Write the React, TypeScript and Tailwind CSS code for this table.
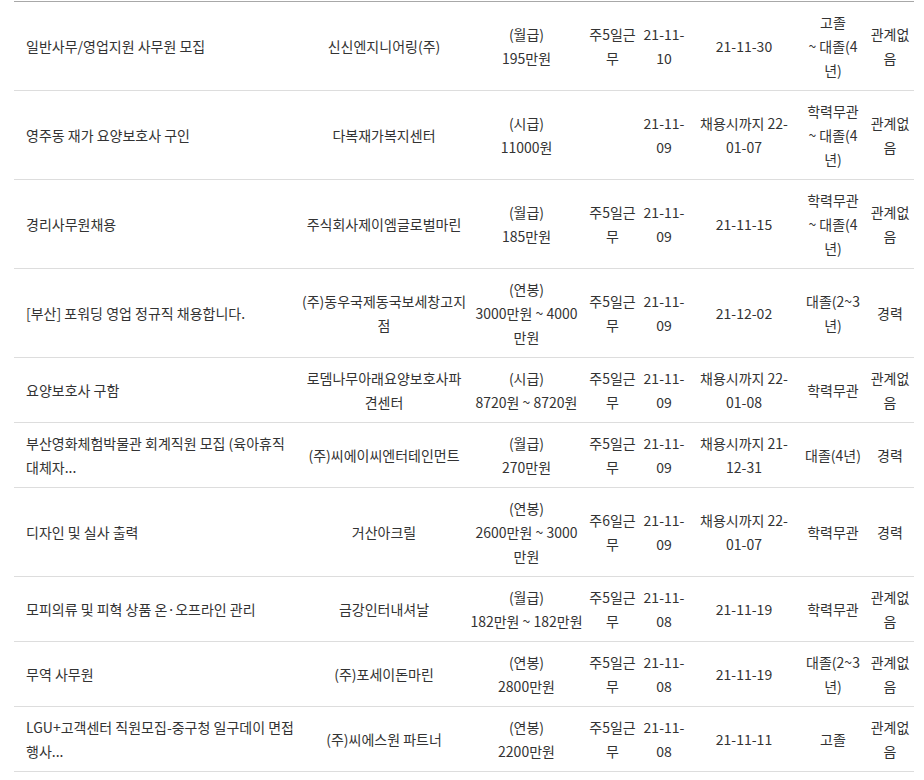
import React from 'react';

type Job = {
  title: string;
  company: string;
  payType: string;
  pay: string;
  work: string;
  date: string;
  deadline: string;
  edu: React.ReactNode;
  exp: string;
};

const jobs: Job[] = [
  { title: '일반사무/영업지원 사무원 모집', company: '신신엔지니어링(주)', payType: '(월급)', pay: '195만원', work: '주5일근무', date: '21-11-10', deadline: '21-11-30', edu: <>고졸<br />~ 대졸(4년)</>, exp: '관계없음' },
  { title: '영주동 재가 요양보호사 구인', company: '다복재가복지센터', payType: '(시급)', pay: '11000원', work: '', date: '21-11-09', deadline: '채용시까지 22-01-07', edu: <>학력무관<br />~ 대졸(4년)</>, exp: '관계없음' },
  { title: '경리사무원채용', company: '주식회사제이엠글로벌마린', payType: '(월급)', pay: '185만원', work: '주5일근무', date: '21-11-09', deadline: '21-11-15', edu: <>학력무관<br />~ 대졸(4년)</>, exp: '관계없음' },
  { title: '[부산] 포워딩 영업 정규직 채용합니다.', company: '(주)동우국제동국보세창고지점', payType: '(연봉)', pay: '3000만원 ~ 4000만원', work: '주5일근무', date: '21-11-09', deadline: '21-12-02', edu: '대졸(2~3년)', exp: '경력' },
  { title: '요양보호사 구함', company: '로뎀나무아래요양보호사파견센터', payType: '(시급)', pay: '8720원 ~ 8720원', work: '주5일근무', date: '21-11-09', deadline: '채용시까지 22-01-08', edu: '학력무관', exp: '관계없음' },
  { title: '부산영화체험박물관 회계직원 모집 (육아휴직 대체자...', company: '(주)씨에이씨엔터테인먼트', payType: '(월급)', pay: '270만원', work: '주5일근무', date: '21-11-09', deadline: '채용시까지 21-12-31', edu: '대졸(4년)', exp: '경력' },
  { title: '디자인 및 실사 출력', company: '거산아크릴', payType: '(연봉)', pay: '2600만원 ~ 3000만원', work: '주6일근무', date: '21-11-09', deadline: '채용시까지 22-01-07', edu: '학력무관', exp: '경력' },
  { title: '모피의류 및 피혁 상품 온·오프라인 관리', company: '금강인터내셔날', payType: '(월급)', pay: '182만원 ~ 182만원', work: '주5일근무', date: '21-11-08', deadline: '21-11-19', edu: '학력무관', exp: '관계없음' },
  { title: '무역 사무원', company: '(주)포세이돈마린', payType: '(연봉)', pay: '2800만원', work: '주5일근무', date: '21-11-08', deadline: '21-11-19', edu: '대졸(2~3년)', exp: '관계없음' },
  { title: 'LGU+고객센터 직원모집-중구청 일구데이 면접 행사...', company: '(주)씨에스원 파트너', payType: '(연봉)', pay: '2200만원', work: '주5일근무', date: '21-11-08', deadline: '21-11-11', edu: '고졸', exp: '관계없음' },
];

export default function App() {
  return (
    <div className="bg-white min-h-[780px] pt-[1px] pl-[14px] font-['Noto_Sans_CJK_KR','Noto_Sans',sans-serif] text-[14px] leading-[24px] text-[#333]">
      <table className="w-[900px] table-fixed border-collapse border-t border-[#a8a8a8]">
        <colgroup>
          <col className="w-[286px]" />
          <col className="w-[168px]" />
          <col className="w-[117px]" />
          <col className="w-[55px]" />
          <col className="w-[48px]" />
          <col className="w-[112px]" />
          <col className="w-[66px]" />
          <col className="w-[48px]" />
        </colgroup>
        <tbody>
          {jobs.map((job, i) => (
            <tr key={i} className="border-b border-[#dddddd] text-center align-middle">
              <td className="py-2 pl-3 pr-0 text-left break-keep">{job.title}</td>
              <td className="py-2 px-px">{job.company}</td>
              <td className="py-2 px-[2px]">
                {job.payType}
                <br />
                {job.pay}
              </td>
              <td className="py-2 px-[2px]">{job.work}</td>
              <td className="py-2 px-[2px]">{job.date}</td>
              <td className="py-2 px-[6px]">{job.deadline}</td>
              <td className="py-2 px-[4px]">{job.edu}</td>
              <td className="py-2 px-[2px]">{job.exp}</td>
            </tr>
          ))}
        </tbody>
      </table>
    </div>
  );
}
